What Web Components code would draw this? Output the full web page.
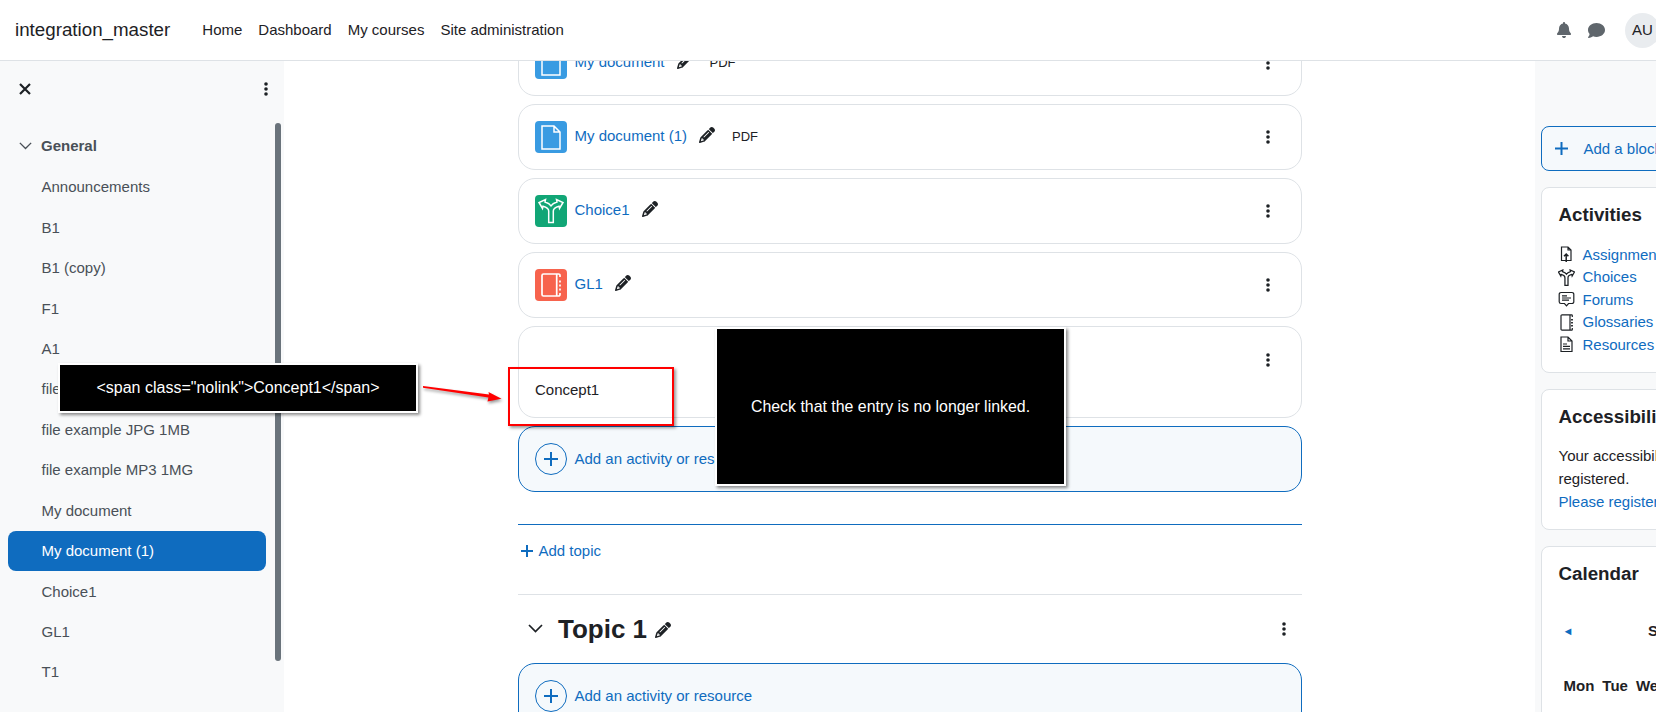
<!DOCTYPE html>
<html lang="en"><head><meta charset="utf-8"><title>Course</title>
<style>
html,body{margin:0;padding:0;height:712px;overflow:hidden;background:#fff;font:15px/22px "Liberation Sans",Arial,sans-serif;color:#1d2125}
</style></head><body>
<app-shell>
  <top-nav brand="integration_master">
    <a>Home</a><a>Dashboard</a><a>My courses</a><a>Site administration</a>
  </top-nav>
  <course-index slot="left">
    <index-item>Announcements</index-item><index-item>B1</index-item><index-item>B1 (copy)</index-item>
    <index-item>F1</index-item><index-item>A1</index-item><index-item>file example PDF 1MB</index-item>
    <index-item>file example JPG 1MB</index-item><index-item>file example MP3 1MG</index-item>
    <index-item>My document</index-item><index-item active>My document (1)</index-item>
    <index-item>Choice1</index-item><index-item>GL1</index-item><index-item>T1</index-item>
  </course-index>
  <course-main slot="main">
    <activity-card icon="doc" name="My document" tag="PDF" style="margin-top:-31px"></activity-card>
    <activity-card icon="doc" name="My document (1)" tag="PDF"></activity-card>
    <activity-card icon="choice" name="Choice1"></activity-card>
    <activity-card icon="glossary" name="GL1"></activity-card>
    <label-card>Concept1</label-card>
    <add-activity></add-activity>
    <add-topic></add-topic>
    <topic-head>Topic 1</topic-head>
    <add-activity></add-activity>
  </course-main>
  <block-drawer slot="right">
    <add-block></add-block>
    <block-card heading="Activities" style="height:186px">
      <activity-link icon="assign" style="margin-top:17px">Assignments</activity-link>
      <activity-link icon="choice">Choices</activity-link>
      <activity-link icon="forum">Forums</activity-link>
      <activity-link icon="glossary">Glossaries</activity-link>
      <activity-link icon="resource">Resources</activity-link>
    </block-card>
    <block-card heading="Accessibility review" style="height:141px">
      <access-note></access-note>
    </block-card>
    <block-card heading="Calendar" style="height:400px">
      <mini-calendar></mini-calendar>
    </block-card>
  </block-drawer>
  <note-box slot="over" style="left:58px;top:363px;width:356px;height:46px">&lt;span class="nolink"&gt;Concept1&lt;/span&gt;</note-box>
  <note-box slot="over" style="left:715px;top:327px;width:347px;height:155px;font-size:15.9px">Check that the entry is no longer linked.</note-box>
  <red-mark slot="over"></red-mark>
</app-shell>
<script>
const PENCIL='M410.3 231l11.3-11.3-33.9-33.9-62.1-62.1L291.7 89.8l-11.3 11.3-22.6 22.6L58.6 322.9c-10.4 10.4-18 23.3-22.2 37.4L1 480.7c-2.5 8.4-.2 17.5 6.1 23.7s15.3 8.5 23.7 6.1l120.3-35.4c14.1-4.2 27-11.8 37.4-22.2L387.7 253.7 410.3 231zM160 399.4l-9.1 22.7c-4 3.1-8.5 5.4-13.3 6.9L59.4 452l23-78.1c1.4-4.9 3.8-9.4 6.9-13.3l22.7-9.1v32c0 8.8 7.2 16 16 16h32zM362.7 18.7L348.3 33.2 325.7 55.8 314.3 67.1l33.9 33.9 62.1 62.1 33.9 33.9 11.3-11.3 22.6-22.6 14.5-14.5c25-25 25-65.5 0-90.5L453.3 18.7c-25-25-65.5-25-90.5 0zm-47.4 168l-144 144c-6.2 6.2-16.4 6.2-22.6 0s-6.2-16.4 0-22.6l144-144c6.2-6.2 16.4-6.2 22.6 0s6.2 16.4 0 22.6z';
const pencil=s=>`<svg width="${s}" height="${s}" viewBox="0 0 512 512" fill="#1d2125" style="display:block;flex:none"><path d="${PENCIL}"/></svg>`;
const kebab=`<svg width="6" height="16" viewBox="0 0 6 16" fill="#1d2125" style="display:block;flex:none"><circle cx="3" cy="3" r="1.8"/><circle cx="3" cy="8" r="1.8"/><circle cx="3" cy="13" r="1.8"/></svg>`;
const plus=(s,w,c='#0f6cbf')=>`<svg width="${s}" height="${s}" viewBox="0 0 ${s} ${s}" stroke="${c}" stroke-width="${w}" fill="none" style="display:block;flex:none"><path d="M${s/2} 0V${s}M0 ${s/2}H${s}"/></svg>`;
const chevron=(w,c,sw)=>`<svg width="${w}" height="${w*0.6}" viewBox="0 0 15 9" stroke="${c}" stroke-width="${sw}" fill="none" style="display:block;flex:none"><path d="M1 1l6.5 6.5L14 1"/></svg>`;
const CHOICE='M13.7 27.5V16C13.7 13.8 11 12 8 11.2L7.5 13.5 4 7.5 10.5 4.5 10 7C12.5 7.8 14.8 9 16 10.8C17.2 9 19.5 7.8 22 7L21.5 4.5 28 7.5 24.5 13.5 24 11.2C21 12 18.3 13.8 18.3 16V27.5Z';
const TILES={
 doc:['#399be2','<path d="M7 5H19L25 11V28H7ZM19 5V11H25"/>'],
 choice:['#11a676',`<path d="${CHOICE}"/>`],
 glossary:['#f7634d','<g stroke-width="1.7"><path d="M21.7 5H8.5A1.5 1.5 0 0 0 7 6.5V25.5A1.5 1.5 0 0 0 8.5 27H21.7ZM21.7 5H23.5A1.5 1.5 0 0 1 25 6.5V8M25 24V25.5A1.5 1.5 0 0 1 23.5 27H21.7M25 11.5v2M25 15.5v2M25 19.5v2"/></g>']
};
const SMALL={
 assign:'<path d="M3.5 1H10L13 4V14.5H3.5ZM10 1V4H13"/><path d="M8.2 16V8M6 10.2L8.2 8L10.4 10.2" stroke-width="1.5"/>',
 choice:'<g transform="translate(-2.2 -2) scale(.667)" stroke-width="1.9"><path d="'+CHOICE+'"/></g>',
 forum:'<path d="M3 1.5H14a1.8 1.8 0 0 1 1.8 1.8V10.7A1.8 1.8 0 0 1 14 12.5H10.5L8.5 14.8 6.5 12.5H3a1.8 1.8 0 0 1-1.8-1.8V3.3A1.8 1.8 0 0 1 3 1.5Z"/><path d="M4 4.8H9M4 7H13M4 9.2H11"/>',
 glossary:'<path d="M12 .8H4a1 1 0 0 0-1 1V15.2a1 1 0 0 0 1 1H12ZM12 .8H13.5a.8.8 0 0 1 .8.8V3M14.3 14v1.4a.8.8 0 0 1-.8.8H12"/><path d="M14 5v1.4M14 8v1.4M14 11v1.4" stroke-width="1.8"/>',
 resource:'<path d="M3 1H10L14 5V15.5H3ZM10 1V5H14"/><path d="M5 8H9M5 10.4H12M5 12.8H12"/>'
};
function def(tag,css,html){
  customElements.define(tag,class extends HTMLElement{
    constructor(){super();this.attachShadow({mode:'open'});}
    connectedCallback(){
      const a=n=>this.getAttribute(n);
      this.shadowRoot.innerHTML=`<style>${css}</style>`+(typeof html==='function'?html(a,this):html);
    }
  });
}
def('app-shell',`:host{display:block;position:relative;width:1656px;height:712px;overflow:hidden}
 .row{display:flex;height:651px}`,
 `<slot></slot><div class="row"><slot name="left"></slot><slot name="main"></slot><slot name="right"></slot></div><slot name="over"></slot>`);
def('top-nav',`:host{display:flex;align-items:center;box-sizing:border-box;height:61px;border-bottom:1px solid #dee2e6;background:#fff;padding-left:15px;position:relative;z-index:5;color:#1d2125}
 .brand{font-size:18.75px;margin-right:32px}
 nav{display:flex;gap:16px}
 ::slotted(a){font-size:15px}
 .end{margin-left:auto;display:flex;align-items:center}
 .av{width:35px;height:35px;border-radius:50%;background:#e9ecef;display:flex;align-items:center;justify-content:center;font-size:15px;margin-left:20px;margin-right:-4px;flex:none}`,
 a=>`<span class="brand">${a('brand')}</span><nav><slot></slot></nav><div class="end">
 <svg width="14" height="16" viewBox="0 0 448 512" fill="#5f666c" style="display:block"><path d="M224 0c-17.7 0-32 14.3-32 32V51.2C119 66 64 130.6 64 208v18.8c0 47-17.3 92.4-48.5 127.6l-7.4 8.3c-8.4 9.4-10.4 22.9-5.3 34.4S19.4 416 32 416H416c12.6 0 24-7.4 29.2-18.9s3.1-25-5.3-34.4l-7.4-8.3C401.3 319.2 384 273.9 384 226.8V208c0-77.4-55-142-128-156.8V32c0-17.7-14.3-32-32-32zm45.3 493.3c12-12 18.7-28.3 18.7-45.3H224 160c0 17 6.7 33.3 18.7 45.3s28.3 18.7 45.3 18.7s33.3-6.7 45.3-18.7z"/></svg>
 <svg width="17" height="17" viewBox="0 0 512 512" fill="#5f666c" style="display:block;margin-left:17px"><path d="M512 240c0 114.9-114.6 208-256 208c-37.1 0-72.3-6.4-104.1-17.9c-11.9 8.7-31.3 20.6-54.3 30.6C73.6 471.1 44.7 480 16 480c-6.5 0-12.3-3.9-14.8-9.9c-2.5-6-1.1-12.8 3.4-17.4c.3-.3 .7-.7 1.3-1.4c1.1-1.2 2.8-3.1 4.9-5.7c4.1-5 9.6-12.4 15.2-21.6c10-16.6 19.5-38.4 21.4-62.9C17.7 326.8 0 285.1 0 240C0 125.1 114.6 32 256 32s256 93.1 256 208z"/></svg>
 <span class="av">AU</span></div>`);
def('course-index',`:host{display:block;flex:0 0 284px;width:284px;background:#f8f9fa;position:relative;overflow:hidden;box-sizing:border-box;color:#495057}
 .top{display:flex;justify-content:space-between;align-items:center;height:56px;padding:0 15px 0 19px}
 .gen{display:flex;align-items:center;height:40px;margin-top:9px;padding-left:19px;font-weight:700;font-size:15px}
 .gen svg{margin-right:9px}
 .list{display:flex;flex-direction:column;padding:1px 0 0 8px;width:258px}
 .sb{position:absolute;left:275px;top:62px;width:6px;height:538px;border-radius:3px;background:#6a737b}`,
 `<div class="top"><svg width="12" height="12" viewBox="0 0 12 12" stroke="#1d2125" stroke-width="2.2" fill="none"><path d="M1 1l10 10M11 1L1 11"/></svg>${kebab}</div>
 <div class="gen">${chevron(13,'#495057',1.6)}General</div><div class="list"><slot></slot></div><div class="sb"></div>`);
def('index-item',`:host{display:flex;align-items:center;box-sizing:border-box;height:40.45px;padding-left:33.5px;border-radius:8px;font-size:15px;color:#495057;white-space:nowrap}
 :host([active]){background:#0f6cbf;color:#fff}`,`<slot></slot>`);
def('course-main',`:host{display:flex;flex-direction:column;gap:8px;flex:1 1 auto;min-width:0;padding-left:234px;padding-right:233px;overflow:hidden;background:#fff}`,`<slot></slot>`);
def('activity-card',`:host{display:flex;align-items:center;flex:none;box-sizing:border-box;height:66px;border:1px solid #dee2e6;border-radius:17px;padding:0 30px 0 16px;background:#fff}
 .t{width:32px;height:32px;border-radius:4px;flex:none;margin-right:7.5px}
 .t svg{display:block}
 a{color:#0f6cbf;margin-top:-2px}
 .p{margin-left:12px;margin-top:-4px}
 .tag{font-size:13px;margin-left:17px;color:#1d2125;margin-top:-1px}
 .k{margin-left:auto}`,
 a=>{const [bg,p]=TILES[a('icon')];return `<div class="t" style="background:${bg}"><svg width="32" height="32" viewBox="0 0 32 32" fill="none" stroke="#fff" stroke-width="1.5">${p}</svg></div><a>${a('name')}</a><span class="p">${pencil(16)}</span>${a('tag')?`<span class="tag">${a('tag')}</span>`:''}<span class="k">${kebab}</span>`});
def('label-card',`:host{display:block;flex:none;box-sizing:border-box;height:92px;border:1px solid #dee2e6;border-radius:17px;padding:17px 30px 0 16px;background:#fff}
 .r{display:flex;justify-content:flex-end;height:32px;align-items:center}
 .c{margin-top:3px}`,`<div class="r">${kebab}</div><div class="c"><slot></slot></div>`);
def('add-activity',`:host{display:flex;align-items:center;flex:none;box-sizing:border-box;height:66px;border:1px solid #0f6cbf;border-radius:17px;padding-left:16px;background:#f5f9fc;color:#0f6cbf}
 .c{width:32px;height:32px;border-radius:50%;border:1px solid #0f6cbf;box-sizing:border-box;display:flex;align-items:center;justify-content:center;margin-right:7.5px;background:#f5f9fc}
 .l{margin-top:-1px}`,
 `<span class="c">${plus(14,2)}</span><span class="l">Add an activity or resource</span>`);
def('add-topic',`:host{display:flex;align-items:center;flex:none;box-sizing:border-box;height:71px;margin-top:24px;border-top:1px solid #0f6cbf;padding-left:3px;color:#0f6cbf;position:relative}
 svg{margin-right:5.5px}
 span{position:relative;top:-9px;display:flex;align-items:center}`,
 `<span>${plus(12,2)}Add topic</span>`);
def('topic-head',`:host{display:flex;align-items:center;flex:none;box-sizing:border-box;height:61px;margin-top:-9px;border-top:1px solid #dee2e6;padding:7px 15px 0 10px}
 .h{font-size:26px;font-weight:700;margin-left:15px;line-height:30px}
 .p{margin-left:8px;margin-top:2px}
 .k{margin-left:auto}`,
 `${chevron(15,'#1d2125',1.7)}<span class="h"><slot></slot></span><span class="p">${pencil(16)}</span><span class="k">${kebab}</span>`);
def('block-drawer',`:host{display:block;flex:0 0 121px;width:121px;box-sizing:border-box;padding:65px 0 0 6px;background:#f8f9fa;overflow:hidden}
 .in{width:290px;display:flex;flex-direction:column;gap:16px}`,`<div class="in"><slot></slot></div>`);
def('add-block',`:host{display:flex;align-items:center;box-sizing:border-box;height:45px;border:1px solid #0f6cbf;border-radius:8px;background:#f5f9fc;color:#0f6cbf;padding-left:13px;white-space:nowrap}
 span{margin-left:15.5px}`,`${plus(13,2)}<span>Add a block</span>`);
def('block-card',`:host{display:block;flex:none;box-sizing:border-box;border:1px solid #dee2e6;border-radius:8px;background:#fff;padding:14.5px 17px 0 16.5px}
 h3{margin:0 0 15px;font-size:18.75px;line-height:24px;font-weight:700;color:#1d2125;white-space:nowrap}`,
 a=>`<h3>${a('heading')}</h3><slot></slot>`);
def('activity-link',`:host{display:flex;align-items:center;height:22.5px;color:#0f6cbf;white-space:nowrap}
 svg{display:block;flex:none;margin-right:8px;margin-left:-1px}`,
 a=>`<svg width="17" height="17" viewBox="0 0 17 17" fill="none" stroke="#1d2125" stroke-width="1.2">${SMALL[a('icon')]}</svg><slot></slot>`);
def('access-note',`:host{display:block;line-height:23px;margin-top:4px;color:#1d2125}
 a{color:#0f6cbf}`,`Your accessibility toolkit needs to be registered.<br><a>Please register your site.</a>`);
def('mini-calendar',`:host{display:block;margin-top:34px}
 .h{display:flex;align-items:center;height:22px;font-weight:700;white-space:nowrap}
 .a{color:#0f6cbf;font-size:11px;margin-left:4px;width:85.5px;font-weight:400}
 .d{display:flex;gap:8px;margin-top:33px;padding-left:5px;font-weight:700;white-space:nowrap}`,
 `<div class="h"><span class="a">&#9668;</span><span>September 2024</span></div>
 <div class="d"><span>Mon</span><span>Tue</span><span>Wed</span><span>Thu</span><span>Fri</span></div>`);
def('note-box',`:host{position:absolute;display:flex;align-items:center;justify-content:center;box-sizing:content-box;border:2px solid #fff;background:#000;color:#fff;font:16px/20px "Liberation Sans",Arial,sans-serif;box-shadow:2px 2px 3px rgba(0,0,0,.45);z-index:10;white-space:nowrap}`,`<slot></slot>`);
def('red-mark',`:host{display:block;position:absolute;left:0;top:0;z-index:11}
 .r{position:absolute;left:508px;top:367px;width:165.5px;height:59px;box-sizing:border-box;border:2px solid #f00;box-shadow:2px 2px 3px rgba(0,0,0,.4)}
 svg{position:absolute;left:420px;top:384px;filter:drop-shadow(1px 2px 1.5px rgba(0,0,0,.4))}`,
 `<div class="r"></div><svg width="84" height="20" viewBox="0 0 84 20"><path d="M3 2L69 10.5 68.5 8 81.5 14.8 67.5 17.5 68.4 13.5 3 3.8Z" fill="#f00"/></svg>`);
</script>
</body></html>
